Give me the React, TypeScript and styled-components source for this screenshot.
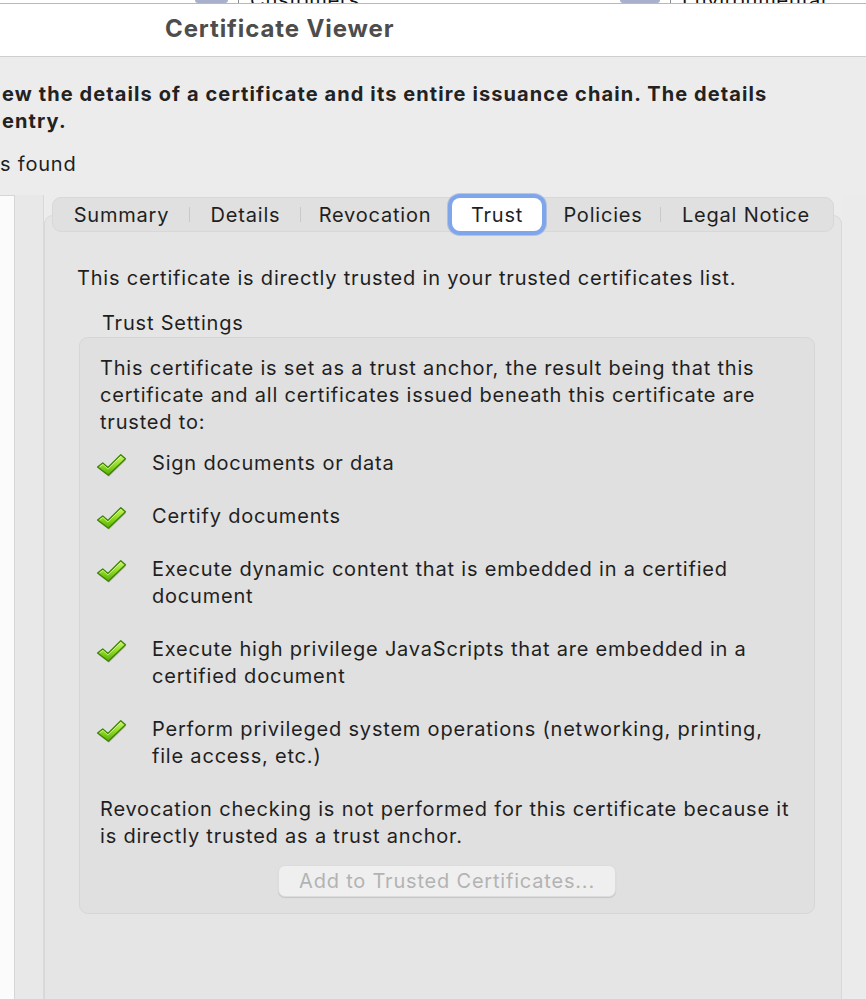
import React from "react";
import styled, { createGlobalStyle } from "styled-components";

const GlobalStyle = createGlobalStyle`
  html, body {
    margin: 0;
    padding: 0;
    background: #ececec;
  }
  body {
    font-family: Inter, "Noto Sans", "Liberation Sans", sans-serif;
    color: #1f1f1f;
    letter-spacing: 0.8px;
    -webkit-font-smoothing: antialiased;
  }
`;

const Page = styled.div`
  width: 866px;
  height: 999px;
  overflow: hidden;
  background: #ececec;
  display: flex;
  flex-direction: column;
`;

// bottom edge of the window behind the dialog
const BehindStrip = styled.div`
  height: 3px;
  overflow: hidden;
  background: #fff;
  border-bottom: 1px solid #b9b9b9;
  display: grid;
  grid-template-columns: 195px 425px 1fr;
  align-items: end;
`;

const BehindGroup = styled.div<{ $col: number }>`
  grid-column: ${(p) => p.$col};
  display: flex;
  align-items: flex-end;
  height: 3px;
  overflow: hidden;
`;

const BehindIcon = styled.span<{ $w: number }>`
  flex: none;
  width: ${(p) => p.$w}px;
  height: 3px;
  background: #a9b0cc;
  border-radius: 0 0 3px 3px;
`;

const BehindSep = styled.span`
  flex: none;
  width: 1px;
  height: 3px;
  margin-left: 10px;
  background: #8a8a8a;
`;

const BehindText = styled.span`
  flex: none;
  margin-left: 11px;
  height: 3px;
  overflow: hidden;
  font-size: 20px;
  line-height: 0;
  color: #111;
  white-space: nowrap;
`;

const TitleBar = styled.header`
  height: 53px;
  box-sizing: border-box;
  background: #fff;
  border-bottom: 1px solid #cfcfcf;
  display: flex;
  align-items: center;
  padding: 0 0 4px 165px;
`;

const Title = styled.h1`
  margin: 0;
  font-size: 24px;
  font-weight: 700;
  color: #4d4d4d;
  letter-spacing: 0.9px;
`;

const Intro = styled.p`
  margin: 24px 0 0 2px;
  font-size: 20px;
  line-height: 27px;
  font-weight: 700;
  letter-spacing: 1.1px;
  color: #222;
  white-space: nowrap;
`;

const Found = styled.p`
  margin: 16px 0 0 0;
  font-size: 20px;
  line-height: 27px;
  white-space: nowrap;
`;

const Workspace = styled.div`
  flex: 1;
  display: flex;
  margin-top: 17px;
  min-height: 0;
`;

const ListPanel = styled.div`
  flex: none;
  width: 14px;
  background: #fbfbfb;
  border-top: 1px solid #d6d6d6;
  border-right: 1px solid #d6d6d6;
`;

const Side = styled.div<{ $edge?: boolean }>`
  flex: ${(p) => (p.$edge ? "none" : "1")};
  width: ${(p) => (p.$edge ? "28px" : "auto")};
  background: ${(p) => (p.$edge ? "#e8e8e8" : "#ebebeb")};
  border-right: ${(p) => (p.$edge ? "1px solid #d9d9d9" : "none")};
`;

const TabArea = styled.section`
  flex: none;
  width: 798px;
  display: flex;
  flex-direction: column;
  margin-top: 2px;
`;

const TabBar = styled.div`
  position: relative;
  z-index: 1;
  display: flex;
  align-items: center;
  height: 35px;
  margin: 0 8px -17px 8px;
  background: #e0e0e0;
  border: 1px solid #d8d8d8;
  border-radius: 9px;
  box-sizing: border-box;
`;

const Tab = styled.div<{ $w: number; $sep?: boolean; $active?: boolean }>`
  flex: none;
  width: ${(p) => p.$w}px;
  height: 100%;
  display: flex;
  align-items: center;
  justify-content: center;
  position: relative;
  font-size: 20px;
  box-sizing: border-box;
  ${(p) =>
    p.$sep &&
    `&::after {
      content: "";
      position: absolute;
      right: 0;
      top: 9px;
      bottom: 9px;
      width: 1px;
      background: #c9c9c9;
    }`}
  ${(p) =>
    p.$active &&
    `background: #fff;
     border-radius: 8px;
     margin: 0 3px;
     height: 33px;
     box-shadow: 0 0 0 4px #7fa5ea, 0 0 0 5px rgba(90, 130, 220, 0.35);`}
`;

const GroupBox = styled.div`
  flex: 1;
  background: #e5e5e5;
  border: 1px solid #d8d8d8;
  border-bottom: none;
  border-radius: 9px 9px 0 0;
  padding: 49px 26px 0 34px;
`;

const Lead = styled.p`
  margin: 0 0 0 -2px;
  font-size: 20px;
  line-height: 27px;
  white-space: nowrap;
`;

const Legend = styled.div`
  margin: 18px 0 0 23px;
  font-size: 20px;
  line-height: 27px;
`;

const SettingsBox = styled.div`
  margin-top: 0;
  background: #e0e0e0;
  border: 1px solid #d6d6d6;
  border-radius: 9px;
  padding: 17px 20px 16px 20px;
`;

const Para = styled.p`
  margin: 0;
  font-size: 20px;
  line-height: 27px;
`;

const Rights = styled.ul`
  list-style: none;
  margin: 14px 0 0 0;
  padding: 0;
  display: flex;
  flex-direction: column;
  gap: 26px;
`;

const Right = styled.li`
  display: flex;
  align-items: flex-start;
`;

const CheckWrap = styled.span`
  flex: none;
  width: 57px;
  height: 27px;
  margin-left: -5px;
  padding-top: 2px;
  box-sizing: border-box;
  display: flex;
  align-items: flex-start;
  overflow: visible;
`;

const RightText = styled.span`
  font-size: 20px;
  line-height: 27px;
`;

const Note = styled(Para)`
  margin-top: 26px;
`;

const ButtonRow = styled.div`
  display: flex;
  justify-content: center;
  margin-top: 15px;
`;

const GhostButton = styled.button`
  width: 338px;
  height: 32px;
  border: 1px solid #dcdcdc;
  border-radius: 7px;
  background: #efefef;
  box-shadow: 0 1px 1px rgba(0, 0, 0, 0.12);
  font-family: inherit;
  font-size: 20px;
  letter-spacing: 0.8px;
  color: #b3b3b3;
  padding: 0;
  cursor: default;
`;

const Check: React.FC = () => (
  <svg width="32" height="26" viewBox="0 0 31 25" style={{ flex: "none" }}>
    <defs>
      <linearGradient id="chk" x1="0" y1="0" x2="0" y2="1">
        <stop offset="0" stopColor="#cdf86a" />
        <stop offset="0.5" stopColor="#8fdc22" />
        <stop offset="1" stopColor="#55ae00" />
      </linearGradient>
    </defs>
    <path
      d="M2.5 14.5 L7.5 10.5 L12.5 15 L25 2.5 L29.5 6.5 L13 22.5 Z"
      fill="rgba(0,0,0,0.18)"
      transform="translate(0.5 1.5)"
    />
    <path
      d="M2.5 14.5 L7.5 10.5 L12.5 15 L25 2.5 L29.5 6.5 L13 22.5 Z"
      fill="url(#chk)"
      stroke="#3d8400"
      strokeWidth="1.3"
      strokeLinejoin="round"
    />
    <path d="M4.5 14.3 L7.6 11.9 L12.5 16.3 L25 4" fill="none" stroke="#e8ffb0" strokeWidth="0.9" opacity="0.8" />
  </svg>
);

const tabs = [
  { label: "Summary", w: 137 },
  { label: "Details", w: 111 },
  { label: "Revocation", w: 148 },
  { label: "Trust", w: 90, active: true },
  { label: "Policies", w: 116 },
  { label: "Legal Notice", w: 170 },
];

const rights = [
  "Sign documents or data",
  "Certify documents",
  "Execute dynamic content that is embedded in a certified document",
  "Execute high privilege JavaScripts that are embedded in a certified document",
  "Perform privileged system operations (networking, printing, file access, etc.)",
];

const App: React.FC = () => {
  return (
    <>
      <GlobalStyle />
      <Page>
        <BehindStrip>
          <BehindGroup $col={2}>
            <BehindIcon $w={33} />
            <BehindSep />
            <BehindText>Customers</BehindText>
          </BehindGroup>
          <BehindGroup $col={3}>
            <BehindIcon $w={40} />
            <BehindSep />
            <BehindText>Environmental</BehindText>
          </BehindGroup>
        </BehindStrip>
        <TitleBar>
          <Title>Certificate Viewer</Title>
        </TitleBar>
        <Intro>
          ew the details of a certificate and its entire issuance chain. The details
          <br /> entry.
        </Intro>
        <Found>s found</Found>
        <Workspace>
          <ListPanel />
          <Side $edge />
          <TabArea>
            <TabBar>
              {tabs.map((t, i) => {
                const next = tabs[i + 1];
                const sep = !t.active && !!next && !next.active;
                return (
                  <Tab key={t.label} $w={t.w} $sep={sep} $active={t.active}>
                    {t.label}
                  </Tab>
                );
              })}
            </TabBar>
            <GroupBox>
              <Lead>This certificate is directly trusted in your trusted certificates list.</Lead>
              <Legend>Trust Settings</Legend>
              <SettingsBox>
                <Para>
                  This certificate is set as a trust anchor, the result being that this certificate and all
                  certificates issued beneath this certificate are trusted to:
                </Para>
                <Rights>
                  {rights.map((r) => (
                    <Right key={r}>
                      <CheckWrap>
                        <Check />
                      </CheckWrap>
                      <RightText>{r}</RightText>
                    </Right>
                  ))}
                </Rights>
                <Note>
                  Revocation checking is not performed for this certificate because it is directly trusted as
                  a trust anchor.
                </Note>
                <ButtonRow>
                  <GhostButton disabled>Add to Trusted Certificates...</GhostButton>
                </ButtonRow>
              </SettingsBox>
            </GroupBox>
          </TabArea>
          <Side />
        </Workspace>
      </Page>
    </>
  );
};

export default App;
